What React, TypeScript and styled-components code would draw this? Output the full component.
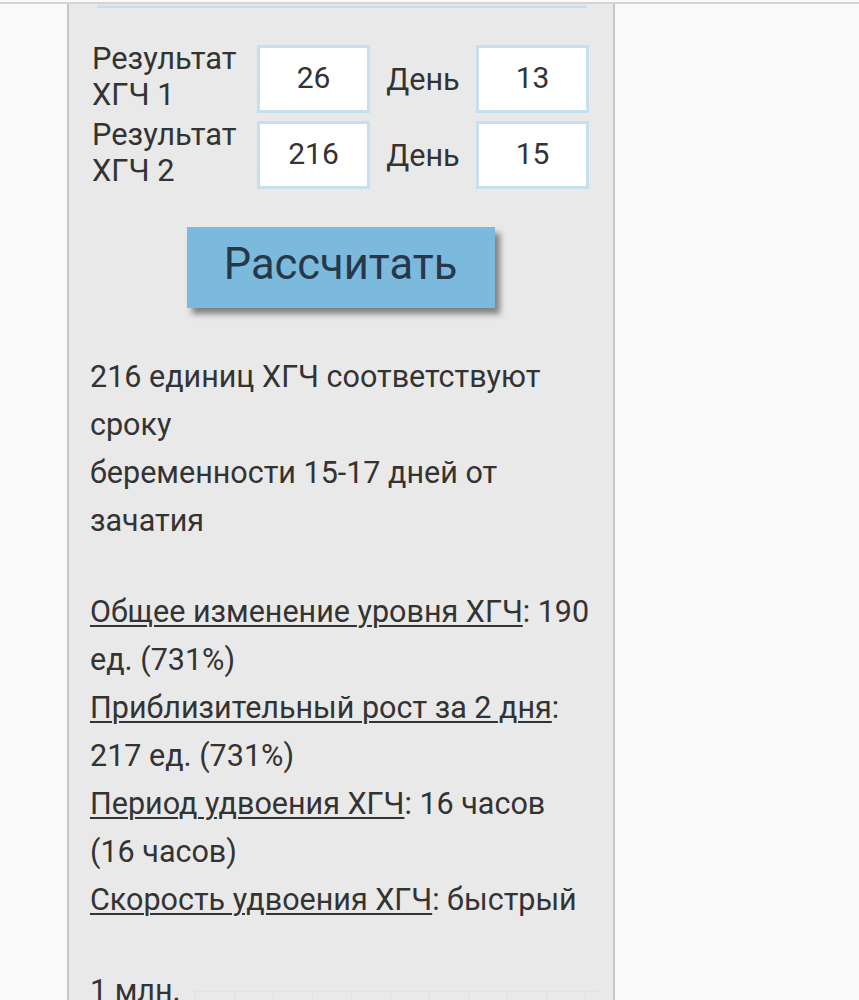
import React from "react";
import styled, { createGlobalStyle } from "styled-components";

const GlobalStyle = createGlobalStyle`
  html, body {
    margin: 0;
    padding: 0;
    background: #fafafa;
    font-family: Roboto, "Noto Sans", "Liberation Sans", sans-serif;
    color: #333;
  }
`;

const Page = styled.div`
  width: 859px;
  height: 1000px;
  overflow: hidden;
  border-top: 2px solid #d4d4d4;
  margin-top: 2px;
  box-sizing: border-box;
`;

const Panel = styled.div`
  margin-left: 67px;
  width: 548px;
  min-height: 1000px;
  box-sizing: border-box;
  background: #e9e9e9;
  border-left: 2px solid #c6c6c6;
  border-right: 2px solid #c6c6c6;
  padding: 0 16px 0 21px;
`;

const PrevBox = styled.div`
  height: 2px;
  margin: 0 10px 0 7px;
  background: #dde6eb;
  border-bottom: 2px solid #c9dde8;
`;

const Form = styled.div`
  display: grid;
  grid-template-columns: 165px 113px 106px 113px;
  row-gap: 8px;
  margin-top: 37px;
  padding-left: 2px;
  align-items: center;
`;

const Label = styled.div`
  font-size: 30.8px;
  line-height: 36px;
  color: #333;
  margin-top: -4px;
`;

const DayLabel = styled.div`
  font-size: 30.6px;
  text-align: center;
  color: #333;
`;

const Field = styled.input`
  width: 113px;
  height: 68px;
  box-sizing: border-box;
  border: 3px solid #c6e0ee;
  background: #fff;
  font-family: inherit;
  font-size: 30px;
  color: #333;
  text-align: center;
  padding: 0 0 4px;
  outline: none;
`;

const ButtonWrap = styled.div`
  display: flex;
  justify-content: center;
  margin-top: 38px;
  padding-right: 6px;
`;

const CalcButton = styled.button`
  width: 308px;
  height: 81px;
  border: none;
  background: #7bbadd;
  box-shadow: 5px 6px 6px rgba(0, 0, 0, 0.45);
  font-family: inherit;
  font-size: 43.5px;
  color: #27384a;
  padding: 0 0 6px;
  cursor: pointer;
`;

const Result = styled.div<{ $top?: number }>`
  margin-top: ${(p) => p.$top ?? 0}px;
  font-size: 30.5px;
  line-height: 48px;
  color: #333;
`;

const Gap = styled.div`
  height: 43px;
`;

const Term = styled.span`
  text-decoration: underline;
  text-decoration-thickness: 2px;
  text-underline-offset: 3px;
`;

const ChartRow = styled.div`
  display: flex;
  align-items: flex-start;
  gap: 14px;
  font-size: 30.5px;
  line-height: 48px;
  color: #333;
`;

const Grid = styled.div`
  flex: 1;
  height: 40px;
  margin-top: 24px;
  border-top: 1px solid #e2e2e2;
  background-image: repeating-linear-gradient(
    to right,
    #e0e0e0 0,
    #e0e0e0 1px,
    transparent 1px,
    transparent 39px
  );
`;

export default function App() {
  return (
    <>
      <GlobalStyle />
      <Page>
        <Panel>
          <PrevBox />
          <Form>
            <Label>
              Результат
              <br />
              ХГЧ 1
            </Label>
            <Field defaultValue="26" />
            <DayLabel>День</DayLabel>
            <Field defaultValue="13" />
            <Label>
              Результат
              <br />
              ХГЧ 2
            </Label>
            <Field defaultValue="216" />
            <DayLabel>День</DayLabel>
            <Field defaultValue="15" />
          </Form>
          <ButtonWrap>
            <CalcButton>Рассчитать</CalcButton>
          </ButtonWrap>
          <Result $top={45}>
            216 единиц ХГЧ соответствуют сроку
            <br />
            беременности 15-17 дней от зачатия
          </Result>
          <Gap />
          <Result>
            <Term>Общее изменение уровня ХГЧ</Term>: 190 ед. (731%)
            <br />
            <Term>Приблизительный рост за 2 дня</Term>: 217 ед. (731%)
            <br />
            <Term>Период удвоения ХГЧ</Term>: 16 часов (16 часов)
            <br />
            <Term>Скорость удвоения ХГЧ</Term>: быстрый
          </Result>
          <Gap />
          <ChartRow>
            <span>1 млн.</span>
            <Grid />
          </ChartRow>
        </Panel>
      </Page>
    </>
  );
}
